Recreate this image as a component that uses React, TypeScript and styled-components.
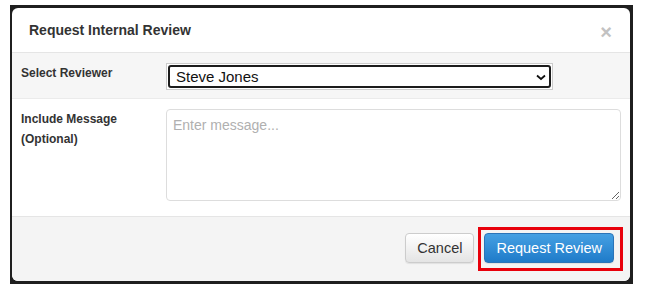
import React from "react";
import styled, { createGlobalStyle } from "styled-components";

const GlobalStyle = createGlobalStyle`
  html, body {
    margin: 0;
    padding: 0;
    background: #ffffff;
    font-family: "Liberation Sans", Arial, sans-serif;
  }
`;

const Page = styled.div`
  padding: 5px 0 0 10px;
`;

const Backdrop = styled.div`
  width: 623px;
  box-sizing: border-box;
  padding: 3px 3px 3px 2px;
  background: #1f1f1f;
`;

const Modal = styled.div`
  width: 618px;
  height: 273px;
  background: #ffffff;
  border-radius: 6px;
  overflow: hidden;
  display: flex;
  flex-direction: column;
`;

const Header = styled.div`
  height: 45px;
  box-sizing: border-box;
  padding: 0 18px 0 17px;
  display: flex;
  align-items: center;
  justify-content: space-between;
  border-bottom: 1px solid #e5e5e5;
`;

const Title = styled.h4`
  margin: 0;
  font-size: 14px;
  line-height: 20px;
  font-weight: bold;
  color: #333333;
`;

const Close = styled.span`
  font-size: 20px;
  line-height: 20px;
  font-weight: bold;
  color: #c2c2c2;
  margin-top: 3px;
`;

const Row = styled.div<{ $shade?: boolean; $bottom: number }>`
  display: grid;
  grid-template-columns: 145px 1fr;
  align-items: start;
  padding: 10px 9px ${(p) => p.$bottom}px 9px;
  background: ${(p) => (p.$shade ? "#f6f6f6" : "#ffffff")};
  border-bottom: 1px solid ${(p) => (p.$shade ? "#ebebeb" : "#e5e5e5")};
`;

const Label = styled.label`
  font-size: 12px;
  line-height: 20px;
  font-weight: bold;
  color: #333333;
`;

const SelectFrame = styled.div`
  position: relative;
  width: 387px;
  box-sizing: border-box;
  border: 1px solid #cccccc;
  padding: 1px;
  background: #ffffff;
`;

const Select = styled.select`
  appearance: none;
  display: block;
  width: 100%;
  height: 23px;
  box-sizing: border-box;
  border: 2px solid #1c1c1c;
  border-radius: 3px;
  padding: 0 24px 0 6px;
  background: #ffffff;
  font-family: "Liberation Sans", Arial, sans-serif;
  font-size: 15px;
  color: #111111;
  outline: none;
`;

const Chevron = styled.svg`
  position: absolute;
  right: 6px;
  top: 10px;
  pointer-events: none;
`;

const Message = styled.textarea`
  display: block;
  width: 455px;
  height: 92px;
  box-sizing: border-box;
  border: 1px solid #dddddd;
  border-radius: 4px;
  padding: 5px 6px;
  font-family: "Liberation Sans", Arial, sans-serif;
  font-size: 14px;
  line-height: 20px;
  color: #333333;
  outline: none;
  &::placeholder {
    color: #b0b0b0;
  }
`;

const Footer = styled.div`
  flex: 1;
  display: flex;
  justify-content: flex-end;
  align-items: flex-start;
  gap: 4px;
  padding: 10px 7px 0 0;
  background: #f4f4f4;
`;

const Highlight = styled.div`
  border: 3px solid #e8000b;
  padding: 3px 6px 5px 3px;
`;

const Button = styled.button<{ $primary?: boolean }>`
  height: 30px;
  box-sizing: border-box;
  padding: 0 11px;
  margin-top: ${(p) => (p.$primary ? 0 : 6)}px;
  border-radius: 4px;
  font-family: "Liberation Sans", Arial, sans-serif;
  font-size: 14.5px;
  cursor: pointer;
  border: 1px solid ${(p) => (p.$primary ? "#2b74b8" : "#cccccc")};
  color: ${(p) => (p.$primary ? "#ffffff" : "#333333")};
  background: ${(p) =>
    p.$primary
      ? "linear-gradient(#45a0e3, #1f7bc9)"
      : "linear-gradient(#ffffff, #e4e4e4)"};
  box-shadow: 0 1px 1px rgba(0, 0, 0, 0.08);
`;

export default function App() {
  return (
    <>
      <GlobalStyle />
      <Page>
        <Backdrop>
          <Modal>
            <Header>
              <Title>Request Internal Review</Title>
              <Close>×</Close>
            </Header>
            <Row $shade $bottom={8}>
              <Label>Select Reviewer</Label>
              <SelectFrame>
                <Select defaultValue="steve">
                  <option value="steve">Steve Jones</option>
                </Select>
                <Chevron width="10" height="7" viewBox="0 0 10 7">
                  <polyline
                    points="1,1.5 5,5 9,1.5"
                    fill="none"
                    stroke="#111"
                    strokeWidth="1.8"
                  />
                </Chevron>
              </SelectFrame>
            </Row>
            <Row $bottom={15}>
              <Label>
                Include Message
                <br />
                (Optional)
              </Label>
              <Message placeholder="Enter message..." />
            </Row>
            <Footer>
              <Button>Cancel</Button>
              <Highlight>
                <Button $primary>Request Review</Button>
              </Highlight>
            </Footer>
          </Modal>
        </Backdrop>
      </Page>
    </>
  );
}
